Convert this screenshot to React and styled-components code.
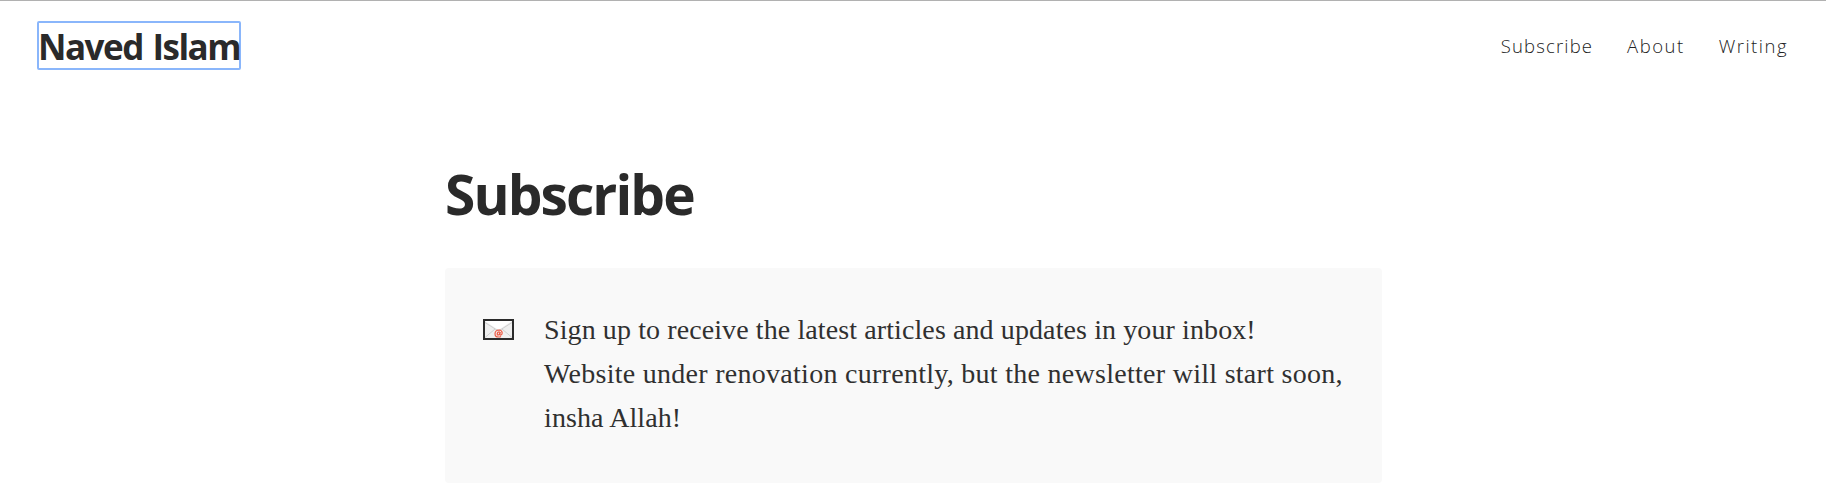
import React from "react";
import styled, { createGlobalStyle } from "styled-components";

const GlobalStyle = createGlobalStyle`
  * { box-sizing: border-box; }
  body {
    margin: 0;
    background: #fff;
    color: #2a2a2a;
    overflow: hidden;
  }
`;

const Page = styled.div`
  height: 499px;
  border-top: 1px solid #b1b1b1;
`;

const Header = styled.header`
  display: flex;
  align-items: flex-start;
  justify-content: space-between;
  padding: 20px 38px 0 37px;
  height: 137px;
`;

const SiteTitle = styled.a`
  width: 204px;
  height: 49px;
  border: 2px solid #8ab6fb;
  border-radius: 2px;
  font: 700 35px/48px "Open Sans", "Noto Sans", sans-serif;
  letter-spacing: -1.5px;
  word-spacing: 2px;
  text-indent: -1px;
  white-space: nowrap;
  color: #2a2a2a;
  text-decoration: none;
`;

const Nav = styled.nav`
  display: flex;
  gap: 34px;
  padding-top: 11px;
`;

const NavLink = styled.a`
  font: 350 18.5px/27px "Open Sans", "Noto Sans", sans-serif;
  letter-spacing: ${(p) => p.$spacing}px;
  color: #222;
  text-decoration: none;
`;

const Main = styled.main`
  width: 937px;
  margin-left: 445px;
`;

const Heading = styled.h1`
  margin: 0 0 35px;
  height: 95px;
  font: 700 55px/111px "Open Sans", "Noto Sans", sans-serif;
  letter-spacing: -1.9px;
`;

const Callout = styled.section`
  display: flex;
  height: 215px;
  padding: 40px 38px;
  background: #f9f9f9;
  border-radius: 4px;
`;

const EnvelopeIcon = styled.svg`
  flex: none;
  width: 31px;
  height: 21px;
  margin: 11px 30px 0 0;
`;

const Message = styled.p`
  margin: 0;
  font: 400 28px/43.8px "Liberation Serif", serif;
  color: #303030;
  white-space: nowrap;
`;

const Line = styled.span`
  display: block;
  letter-spacing: ${(p) => p.$spacing}px;
`;

function Envelope() {
  return (
    <EnvelopeIcon viewBox="0 0 31 21" aria-hidden="true">
      <rect x="1" y="1" width="29" height="19" fill="#efefef" stroke="#2b2b2b" strokeWidth="2" />
      <path d="M2 2H29L15.5 11Z" fill="#fff" />
      <path d="M2 3.5L13 10.5Q15.5 12 18 10.5L29 3.5M2 18.5L12 10M29 18.5L19 10" fill="none" stroke="#cfcfcf" />
      <path d="M17.3 12.8L16.9 15Q16.7 16.3 18 16Q19.2 15.4 19.2 14Q19 11 16 11Q12.2 11.2 12 14.7Q12 18 15.5 18Q17 18 18 17.4M17 14Q16.8 12.8 15.8 12.9Q14.3 13 14.2 14.9Q14.3 16.2 15.3 16Q16.5 15.8 17 14" fill="none" stroke="#ee5a44" strokeWidth="1.2" />
    </EnvelopeIcon>
  );
}

export default function App() {
  return (
    <Page>
      <GlobalStyle />
      <Header>
        <SiteTitle href="#">Naved Islam</SiteTitle>
        <Nav>
          <NavLink href="#" $spacing={1.15}>Subscribe</NavLink>
          <NavLink href="#" $spacing={1.5}>About</NavLink>
          <NavLink href="#" $spacing={1.5}>Writing</NavLink>
        </Nav>
      </Header>
      <Main>
        <Heading>Subscribe</Heading>
        <Callout>
          <Envelope />
          <Message>
            <Line $spacing={0.1}>Sign up to receive the latest articles and updates in your inbox!</Line>
            <Line $spacing={0.28}>Website under renovation currently, but the newsletter will start soon,</Line>
            <Line $spacing={0.1}>insha Allah!</Line>
          </Message>
        </Callout>
      </Main>
    </Page>
  );
}
